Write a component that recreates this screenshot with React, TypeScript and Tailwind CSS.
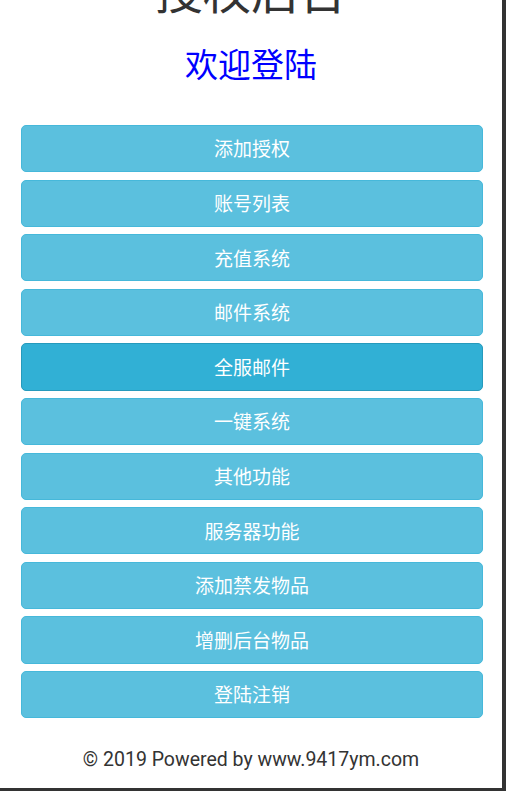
import React from 'react';

const menuItems = [
  '添加授权',
  '账号列表',
  '充值系统',
  '邮件系统',
  '全服邮件',
  '一键系统',
  '其他功能',
  '服务器功能',
  '添加禁发物品',
  '增删后台物品',
  '登陆注销',
];

const App = () => {
  return (
    <div className="w-[506px] h-[791px] bg-[#333] overflow-hidden">
      <div
        className="w-[502px] h-[788px] bg-white flex flex-col overflow-hidden"
        style={{ fontFamily: '"Noto Sans CJK SC", Roboto, sans-serif' }}
      >
        {/* Header */}
        <h1 className="mt-[-36px] text-center text-[48px] leading-[48px] text-[#333] font-normal">
          授权后台
        </h1>
        <h2 className="mt-[35px] text-center text-[33px] leading-[33px] text-[#0000ff] font-normal">
          欢迎登陆
        </h2>

        {/* Menu */}
        <div className="mt-[45px] ml-[21px] mr-[19px] flex flex-col gap-[7.3px]">
          {menuItems.map((item, index) => (
            <button
              key={index}
              className={`h-[47.3px] w-full rounded-[5px] border text-white text-[19px] flex items-center justify-center ${
                item === '全服邮件'
                  ? 'bg-[#31b0d5] border-[#269abc]'
                  : 'bg-[#5bc0de] border-[#46b8da]'
              }`}
            >
              {item}
            </button>
          ))}
        </div>

        {/* Footer */}
        <p
          className="mt-[30px] text-center text-[19.5px] leading-[24px] text-[#333]"
          style={{ fontFamily: 'Roboto, "Noto Sans CJK SC", sans-serif' }}
        >
          © 2019 Powered by www.9417ym.com
        </p>
      </div>
    </div>
  );
};

export default App;
